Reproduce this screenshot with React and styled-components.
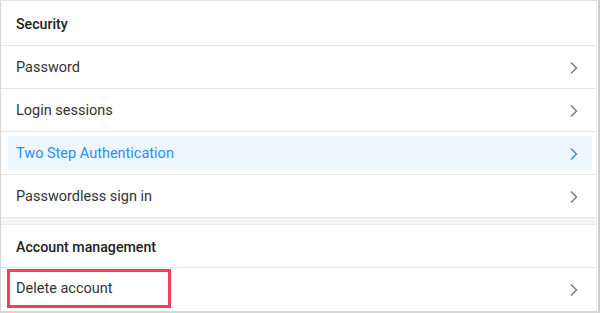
import React from 'react';
import styled, { createGlobalStyle } from 'styled-components';

const Global = createGlobalStyle`
  html, body {
    margin: 0;
    padding: 0;
    background: #ffffff;
  }
  body {
    font-family: Roboto, "Liberation Sans", Arial, sans-serif;
  }
`

const Frame = styled.div`
  width: 600px;
  height: 313px;
  box-sizing: border-box;
  border-left: 1px solid #d4d4d4;
  border-right: 2px solid #cdcdcd;
  border-top: 1px solid #e2e2e2;
  border-bottom: 2px solid #d8d8d8;
  overflow: hidden;
`
const Card = styled.div`
  margin-right: 1px;
  border-right: 1px solid #ececec;
  display: flex;
  flex-direction: column;
`
const Header = styled.div`
  height: ${p => p.$h}px;
  box-sizing: border-box;
  display: flex;
  align-items: center;
  padding: 1px 15px 0;
  font-size: 14.2px;
  font-weight: 500;
  color: #222;
  border-bottom: 1px solid #e6e6e6;
`
const Row = styled.div`
  height: 43px;
  box-sizing: border-box;
  display: flex;
  align-items: center;
  justify-content: space-between;
  padding: ${p => p.$active ? '4px 4px 4px 7px' : '1px 17px 0 15px'};
  border-bottom: ${p => p.$last ? 'none' : '1px solid #e6e6e6'};
  font-size: 14.5px;
  color: ${p => p.$active ? '#2a8ff0' : '#333'};
`
const RowInner = styled.div`
  flex: 1;
  align-self: stretch;
  display: flex;
  align-items: center;
  justify-content: space-between;
  padding: 1px 13px 0 8px;
  background: #eef7fe;
`
const Gap = styled.div`
  height: 7px;
  box-sizing: border-box;
  background: #f5f5f5;
  border-bottom: 1px solid #ececec;
`
const Annotated = styled.span`
  display: flex;
  align-items: center;
  align-self: flex-start;
  box-sizing: border-box;
  width: 164px;
  height: 39px;
  margin-left: -9px;
  padding-left: 6px;
  border: 3px solid #f2405c;
`

const Chevron = ({ color = '#777' }) => (
  <svg width="10" height="14" viewBox="0 0 10 14">
    <path d="M2 1.5 L7.5 7 L2 12.5" fill="none" stroke={color} strokeWidth="1.4" />
  </svg>
)

const items = ['Password', 'Login sessions']

export default function App() {
  return (
    <>
      <Global />
      <Frame>
        <Card>
          <Header $h={45}>Security</Header>
          {items.map(t => (
            <Row key={t}>
              <span>{t}</span>
              <Chevron />
            </Row>
          ))}
          <Row $active>
            <RowInner>
              <span>Two Step Authentication</span>
              <Chevron color="#2a8ff0" />
            </RowInner>
          </Row>
          <Row>
            <span>Passwordless sign in</span>
            <Chevron />
          </Row>
          <Gap />
          <Header $h={43}>Account management</Header>
          <Row $last>
            <Annotated>Delete account</Annotated>
            <Chevron />
          </Row>
        </Card>
      </Frame>
    </>
  )
}
